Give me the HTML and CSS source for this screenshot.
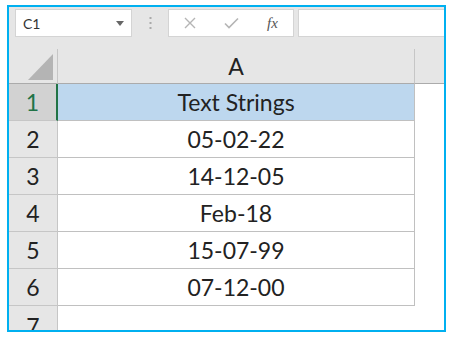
FILE: index.html
```html
<!DOCTYPE html>
<html lang="en">
<head>
    <meta charset="UTF-8">
    <title>Text Strings</title>
    <link rel="stylesheet" href="styles.css">
</head>
<body>
    <div class="frame">
        <div class="toolbar">
            <div class="name-box">
                <span>C1</span>
                <svg class="caret" width="8" height="5" viewBox="0 0 8 5"><path d="M0 0H8L4 5Z" fill="#666"/></svg>
            </div>
            <div class="dots">
                <svg width="3" height="12" viewBox="0 0 3 12"><rect x="0.5" y="0" width="2" height="2" fill="#aaa"/><rect x="0.5" y="5" width="2" height="2" fill="#aaa"/><rect x="0.5" y="10" width="2" height="2" fill="#aaa"/></svg>
            </div>
            <div class="fx-box">
                <svg width="12" height="12" viewBox="0 0 12 12"><path d="M1 1L11 11M11 1L1 11" stroke="#b5b5b5" stroke-width="1.4" fill="none"/></svg>
                <svg width="15" height="12" viewBox="0 0 15 12"><path d="M1 6.5L5 10.5L14 1.5" stroke="#b5b5b5" stroke-width="1.6" fill="none"/></svg>
                <span class="fx">fx</span>
            </div>
            <div class="formula-box"></div>
        </div>

        <div class="sheet">
            <div class="row head-row">
                <div class="corner"><div class="tri"></div></div>
                <div class="col-head">A</div>
                <div class="rest"></div>
            </div>
            <div class="row">
                <div class="rh active">1</div>
                <div class="cell title-cell">Text Strings</div>
                <div class="rest"></div>
            </div>
            <div class="row">
                <div class="rh">2</div>
                <div class="cell">05-02-22</div>
                <div class="rest"></div>
            </div>
            <div class="row">
                <div class="rh">3</div>
                <div class="cell">14-12-05</div>
                <div class="rest"></div>
            </div>
            <div class="row">
                <div class="rh">4</div>
                <div class="cell">Feb-18</div>
                <div class="rest"></div>
            </div>
            <div class="row">
                <div class="rh">5</div>
                <div class="cell">15-07-99</div>
                <div class="rest"></div>
            </div>
            <div class="row">
                <div class="rh">6</div>
                <div class="cell">07-12-00</div>
                <div class="rest"></div>
            </div>
            <div class="row last">
                <div class="rh">7</div>
                <div class="blank"></div>
            </div>
        </div>
    </div>
</body>
</html>
```

FILE: styles.css
```css
body {
    margin: 0;
    background-color: #ffffff;
    font-family: 'Lato', 'Liberation Sans', sans-serif;
}
.frame {
    margin: 5px 0 0 7px;
    width: 439px;
    height: 327px;
    box-sizing: border-box;
    border: 2px solid #00b0f0;
    background-color: #e6e6e6;
    overflow: hidden;
    display: flex;
    flex-direction: column;
}
.toolbar {
    display: flex;
    align-items: flex-start;
    padding: 2px 0 0 6px;
    height: 39px;
    box-sizing: border-box;
    flex-shrink: 0;
}
.name-box {
    width: 117px;
    height: 28px;
    box-sizing: border-box;
    background-color: #ffffff;
    border: 1px solid #d4d4d4;
    display: flex;
    align-items: center;
    justify-content: space-between;
    padding: 0 7px 0 7px;
    font-size: 14px;
    color: #333;
}
.dots {
    width: 36px;
    height: 28px;
    display: flex;
    align-items: center;
    justify-content: center;
}
.fx-box {
    width: 126px;
    height: 28px;
    box-sizing: border-box;
    background-color: #ffffff;
    border: 1px solid #d4d4d4;
    display: flex;
    align-items: center;
    padding: 0 0 0 15px;
    gap: 28px;
}
.fx {
    font-family: 'Liberation Serif', serif;
    font-style: italic;
    font-size: 15px;
    color: #555;
}
.formula-box {
    flex: 1;
    height: 28px;
    margin-left: 4px;
    box-sizing: border-box;
    background-color: #ffffff;
    border: 1px solid #d4d4d4;
    border-right: none;
}
.sheet {
    flex: 1;
    display: flex;
    flex-direction: column;
    margin-top: 3px;
}
.row {
    display: flex;
    flex-shrink: 0;
    height: 37px;
    font-size: 23px;
    color: #222;
}
.head-row {
    height: 35px;
}
.corner {
    width: 49px;
    border-right: 1px solid #c6c6c6;
    border-bottom: 1px solid #ababab;
    display: flex;
    align-items: flex-end;
    justify-content: flex-end;
    padding: 0 4px 3px 0;
    box-sizing: border-box;
}
.tri {
    width: 0;
    height: 0;
    border-left: 25px solid transparent;
    border-bottom: 26px solid #b4b4b4;
}
.col-head {
    width: 357px;
    box-sizing: border-box;
    border-right: 1px solid #c6c6c6;
    border-bottom: 1px solid #ababab;
    display: flex;
    align-items: center;
    justify-content: center;
    color: #222;
}
.rest {
    flex: 1;
    background-color: #ffffff;
}
.head-row .rest {
    background-color: #e6e6e6;
    border-bottom: 1px solid #ababab;
}
.rh {
    width: 49px;
    box-sizing: border-box;
    border-right: 1px solid #c6c6c6;
    border-bottom: 1px solid #c6c6c6;
    display: flex;
    align-items: center;
    justify-content: center;
    background-color: #e6e6e6;
}
.rh.active {
    background-color: #d2d2d2;
    border-right: 2px solid #217346;
    color: #217346;
}
.cell {
    width: 357px;
    box-sizing: border-box;
    background-color: #ffffff;
    border-right: 1px solid #c0c0c0;
    border-bottom: 1px solid #c0c0c0;
    display: flex;
    align-items: center;
    justify-content: center;
}
.title-cell {
    background-color: #bdd7ee;
}
.last {
    flex: 1;
}
.last .rh {
    border-bottom: none;
    align-items: flex-start;
    padding-top: 6px;
}
.blank {
    flex: 1;
    background-color: #ffffff;
}
```
